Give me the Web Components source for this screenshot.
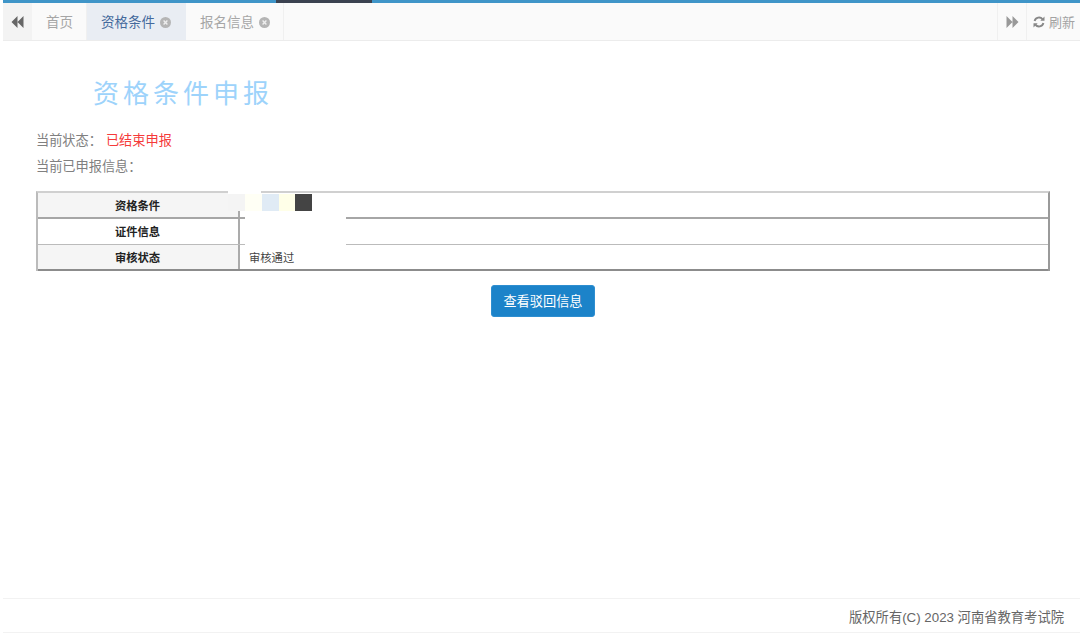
<!DOCTYPE html>
<html lang="zh">
<head>
<meta charset="utf-8">
<title>资格条件申报</title>
<style>
    html, body { margin: 0; height: 100%; background: #fff; }
    body { font-family: "Liberation Sans", "Noto Sans CJK SC", sans-serif; }
</style>
</head>
<body>
<app-shell>
    <tab-bar slot="tabs">
        <tab-item>首页</tab-item>
        <tab-item active closable>资格条件</tab-item>
        <tab-item closable>报名信息</tab-item>
    </tab-bar>
    <apply-page></apply-page>
    <page-footer slot="footer">版权所有(C) 2023 河南省教育考试院</page-footer>
</app-shell>

<script>
class AppShell extends HTMLElement {
    constructor() {
        super();
        this.attachShadow({mode: 'open'}).innerHTML = `
            <style>
                :host { display: flex; flex-direction: column; height: 633px; overflow: hidden; }
                .progress { flex: none; height: 3px; margin-left: 3px; background: #3f95c8; display: flex; }
                .progress i { width: 96px; margin-left: 273px; background: #3b4250; }
                main { flex: 1; min-height: 0; }
            </style>
            <div class="progress"><i></i></div>
            <slot name="tabs"></slot>
            <main><slot></slot></main>
            <slot name="footer"></slot>
        `;
    }
}

class TabBar extends HTMLElement {
    constructor() {
        super();
        this.attachShadow({mode: 'open'}).innerHTML = `
            <style>
                :host { display: flex; flex: none; height: 38px; margin-left: 3px; background: #fafafa; border-bottom: 1px solid #ececec; box-sizing: border-box; font-size: 13.5px; }
                .arrow { flex: none; width: 29px; display: flex; align-items: center; justify-content: center; }
                .left { background: #f3f3f3; }
                .right { border-left: 1px solid #f0f0f0; box-sizing: border-box; }
                .tabs { flex: 1; display: flex; }
                .refresh { flex: none; width: 54px; box-sizing: border-box; border-left: 1px solid #f0f0f0; padding-left: 6px; display: flex; align-items: center; gap: 4px; color: #a3a3a3; font-size: 13px; }
                svg { display: block; }
            </style>
            <div class="arrow left">
                <svg width="13" height="12" viewBox="0 0 13 12"><path fill="#666" d="M6.5 0v12L0.5 6zM12.5 0v12L6.5 6z"/></svg>
            </div>
            <div class="tabs"><slot></slot></div>
            <div class="arrow right">
                <svg width="13" height="12" viewBox="0 0 13 12"><path fill="#999" d="M0.5 0l6 6-6 6zM6.5 0l6 6-6 6z"/></svg>
            </div>
            <div class="refresh">
                <svg width="12" height="12" viewBox="0 0 12 12"><path fill="none" stroke="#888" stroke-width="1.9" d="M1.6 5A4.5 4.5 0 0 1 9.6 3.4M10.4 7A4.5 4.5 0 0 1 2.4 8.6"/><path fill="#888" d="M11.5 0.6v4.2H7.3zM0.5 11.4V7.2h4.2z"/></svg>
                刷新
            </div>
        `;
    }
}

class TabItem extends HTMLElement {
    constructor() {
        super();
        this.attachShadow({mode: 'open'}).innerHTML = `
            <style>
                :host { display: flex; align-items: center; gap: 5px; padding: 0 13px 1px 14px; color: #a6a6a6; border-right: 1px solid #f0f0f0; box-sizing: border-box; }
                :host([active]) { background: #e9edf3; color: #44699c; border-right: 0; padding-right: 15px; }
                svg { display: none; margin-top: 2px; }
                :host([closable]) svg { display: block; }
            </style>
            <slot></slot>
            <svg width="11" height="11" viewBox="0 0 11 11">
                <circle cx="5.5" cy="5.5" r="5.5" fill="#b5b5b5"/>
                <path stroke="#eee" stroke-width="1.4" d="M3.6 3.6l3.8 3.8M7.4 3.6l-3.8 3.8"/>
            </svg>
        `;
    }
}

class InfoRow extends HTMLElement {
    constructor() {
        super();
        this.attachShadow({mode: 'open'}).innerHTML = `
            <style>
                :host { display: grid; grid-template-columns: 202px 1fr; height: 26px; box-sizing: border-box; border-bottom: 1px solid #bbb; font-size: 11.3px; color: #444; }
                :host([thick]) { border-bottom: 2px solid #a6a6a6; }
                :host([end]) { border-bottom: 2px solid #8c8c8c; }
                .label { display: flex; align-items: center; justify-content: center; font-weight: bold; color: #222; border-right: 2px solid #ababab; padding-right: 1px; }
                :host(:not([thick]):not([end])) .label { padding-bottom: 2px; box-sizing: border-box; }
                :host([shade]) .label { background: #f5f5f5; }
                .value { display: flex; align-items: center; padding-left: 9px; }
            </style>
            <div class="label"><slot name="label"></slot></div>
            <div class="value"><slot></slot></div>
        `;
    }
}

class ApplyPage extends HTMLElement {
    constructor() {
        super();
        this.attachShadow({mode: 'open'}).innerHTML = `
            <style>
                :host { display: block; padding: 38px 30px 0 36px; font-size: 13.2px; color: #808080; }
                h1 { margin: 0 0 19px 57px; font-size: 26px; line-height: 30px; font-weight: normal; letter-spacing: 4px; color: #9dd3fb; }
                .line { height: 26px; line-height: 26px; }
                .red { color: #f53a3a; margin-left: 4px; }
                .table { position: relative; margin-top: 11px; border-style: solid; border-width: 2px 2px 0 2px; border-color: #d0d0d0 #9a9a9a #9a9a9a #bbb; }
                .mask { position: absolute; background: #fff; }
                .sq { position: absolute; top: 1px; height: 17px; }
                .actions { display: flex; justify-content: center; margin-top: 14px; }
                button { width: 104px; height: 32px; border: 1px solid #2e8ed0; border-radius: 3px; background: #1c83c9; color: #fff; font: inherit; font-size: 13.2px; padding: 0 0 2px; }
            </style>
            <h1>资格条件申报</h1>
            <div class="line">当前状态：<span class="red">已结束申报</span></div>
            <div class="line">当前已申报信息：</div>
            <div class="table">
                <info-row shade thick><span slot="label">资格条件</span></info-row>
                <info-row><span slot="label">证件信息</span></info-row>
                <info-row shade end><span slot="label">审核状态</span>审核通过</info-row>
                <div class="mask" style="left:190px;top:-5px;width:33px;height:6px"></div>
                <i class="sq" style="left:190px;width:17px;background:#f4f4f4"></i>
                <i class="sq" style="left:207px;width:17px;background:#fffff5"></i>
                <i class="sq" style="left:224px;width:17px;background:#e0ebf5"></i>
                <i class="sq" style="left:241px;width:16px;background:#ffffe8"></i>
                <i class="sq" style="left:257px;width:17px;background:#444"></i>
                <div class="mask" style="left:207px;top:18px;width:101px;height:35px"></div>
            </div>
            <div class="actions"><button>查看驳回信息</button></div>
        `;
    }
}

class PageFooter extends HTMLElement {
    constructor() {
        super();
        this.attachShadow({mode: 'open'}).innerHTML = `
            <style>
                :host { display: block; flex: none; height: 35px; margin-left: 3px; box-sizing: border-box; border-top: 1px solid #f2f2f2; border-bottom: 1px solid #f2f2f2; padding-right: 16px; text-align: right; font-size: 13.3px; line-height: 38px; color: #666; }
            </style>
            <slot></slot>
        `;
    }
}

customElements.define('app-shell', AppShell);
customElements.define('tab-bar', TabBar);
customElements.define('tab-item', TabItem);
customElements.define('info-row', InfoRow);
customElements.define('apply-page', ApplyPage);
customElements.define('page-footer', PageFooter);
</script>
</body>
</html>
